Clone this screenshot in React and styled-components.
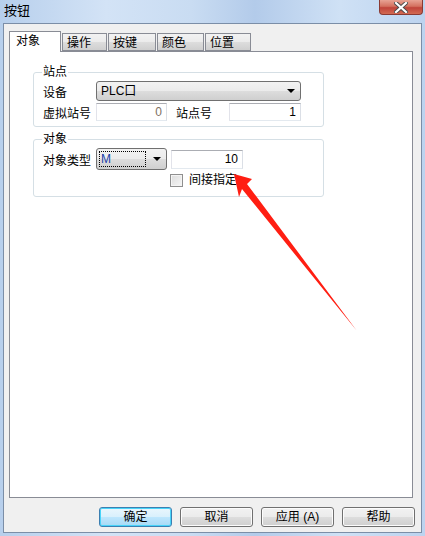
import React from 'react'
import styled, { createGlobalStyle } from 'styled-components'

const GlobalStyle = createGlobalStyle`
  html, body {
    margin: 0;
    padding: 0;
    background: #ffffff;
  }
  body {
    font-family: "Liberation Sans", "Noto Sans CJK SC", sans-serif;
    font-size: 12px;
    color: #000;
  }
`

const abas = [
  { nome: '对象', ativa: true, largura: 52 },
  { nome: '操作', largura: 45 },
  { nome: '按键', largura: 48 },
  { nome: '颜色', largura: 47 },
  { nome: '位置', largura: 46 },
]

const botoes = [
  { nome: '确定', foco: true },
  { nome: '取消' },
  { nome: '应用 (A)' },
  { nome: '帮助' },
]

const App = () => {

  return (

    <Janela>
      <GlobalStyle />

      <BarraTitulo>
        <Titulo>按钮</Titulo>
        <BotaoFechar>
          <svg width="14" height="11" viewBox="0 0 14 11">
            <path d="M2 1 L12 10 M12 1 L2 10" stroke="#4a4a4a" strokeWidth="4" strokeLinecap="square" />
            <path d="M2 1 L12 10 M12 1 L2 10" stroke="#ffffff" strokeWidth="2.2" strokeLinecap="square" />
          </svg>
        </BotaoFechar>
      </BarraTitulo>

      <Cliente>

        <Abas>
          { abas.map( aba => (
            <Aba key={ aba.nome } ativa={ aba.ativa } largura={ aba.largura }>{ aba.nome }</Aba>
          )) }
        </Abas>

        <Painel>

          <Grupo>
            <Legenda>站点</Legenda>
            <Linha>
              <Rotulo>设备</Rotulo>
              <Combo largura={ 205 }>
                <ComboTexto>PLC口</ComboTexto>
                <Seta />
              </Combo>
            </Linha>
            <Linha topo={ 2 }>
              <Rotulo>虚拟站号</Rotulo>
              <Campo largura={ 71 } cinza>0</Campo>
              <RotuloMeio>站点号</RotuloMeio>
              <Campo largura={ 72 }>1</Campo>
            </Linha>
          </Grupo>

          <Grupo segundo>
            <Legenda>对象</Legenda>
            <Linha>
              <Rotulo>对象类型</Rotulo>
              <Combo largura={ 71 } alto={ 22 }>
                <Foco>M</Foco>
                <Seta />
              </Combo>
              <Campo largura={ 72 } esquerda={ 4 } alto={ 19 }>10</Campo>
            </Linha>
            <LinhaCheck>
              <Caixa />
              <span>间接指定</span>
            </LinhaCheck>
          </Grupo>

        </Painel>

        <Botoes>
          { botoes.map( botao => (
            <Botao key={ botao.nome } foco={ botao.foco }>{ botao.nome }</Botao>
          )) }
        </Botoes>

      </Cliente>

      <Flecha width="425" height="536" viewBox="0 0 425 536">
        <polygon
          points="234,174 252,179 247,184 357,331 242,189 239,197"
          fill="#ff1e12"
        />
      </Flecha>

    </Janela>

  )

}

const Janela = styled.div `
  position: relative;
  width: 425px;
  height: 536px;
  box-sizing: border-box;
  display: flex;
  flex-direction: column;
  padding: 0 3px 3px 3px;
  background: linear-gradient(90deg, #b7cfec 0%, #d3e3f6 25%, #c9dcf2 45%, #b3cbea 60%, #cfe1f5 80%, #bcd3ef 100%);
  overflow: hidden;
`

const BarraTitulo = styled.div `
  height: 23px;
  display: flex;
  justify-content: space-between;
  align-items: flex-start;
`

const Titulo = styled.span `
  margin: 3px 0 0 1px;
  font-size: 13px;
  line-height: 16px;
  color: #000;
`

const BotaoFechar = styled.div `
  width: 44px;
  height: 15px;
  margin-right: -1px;
  box-sizing: border-box;
  border: 1px solid #8a3a33;
  border-top: none;
  border-radius: 0 0 4px 4px;
  background: linear-gradient(#e8a394 0%, #d4715f 45%, #c0443a 55%, #d26a52 100%);
  display: flex;
  align-items: center;
  justify-content: center;
`

const Cliente = styled.div `
  flex: 1;
  display: flex;
  flex-direction: column;
  background: #f0f0f0;
  border: 1px solid #7b8ea7;
  padding: 7px 8px 5px 5px;
  min-height: 0;
`

const Abas = styled.div `
  display: flex;
  align-items: flex-end;
  height: 20px;
  position: relative;
  z-index: 1;
`

const Aba = styled.div `
  width: ${ p => p.largura }px;
  height: ${ p => p.ativa ? 21 : 18 }px;
  box-sizing: border-box;
  margin-bottom: ${ p => p.ativa ? -1 : 0 }px;
  margin-right: 1px;
  border: 1px solid #898c95;
  border-bottom: ${ p => p.ativa ? 'none' : '1px solid #898c95' };
  background: ${ p => p.ativa ? '#ffffff' : 'linear-gradient(#f2f2f2, #ebebeb 50%, #dddddd 51%, #cfcfcf)' };
  padding-left: ${ p => p.ativa ? 6 : 4 }px;
  line-height: ${ p => p.ativa ? 19 : 18 }px;
  font-size: 12px;
`

const Painel = styled.div `
  flex: 1;
  background: #ffffff;
  border: 1px solid #898c95;
  padding: 13px 0 0 23px;
`

const Grupo = styled.fieldset `
  width: 291px;
  box-sizing: border-box;
  margin: ${ p => p.segundo ? '5px' : '0' } 0 0 0;
  padding: 2px 0 ${ p => p.segundo ? 9 : 5 }px 9px;
  border: 1px solid #d5dfe5;
  border-radius: 3px;
  min-width: 0;
`

const Legenda = styled.legend `
  padding: 0 1px;
  margin-left: -1px;
  font-size: 12px;
  line-height: 14px;
`

const Linha = styled.div `
  display: flex;
  align-items: center;
  margin-top: ${ p => p.topo || 0 }px;
`

const Rotulo = styled.span `
  width: 53px;
  flex: none;
  white-space: nowrap;
`

const RotuloMeio = styled.span `
  width: 62px;
  flex: none;
  padding-left: 9px;
  box-sizing: border-box;
  white-space: nowrap;
`

const Combo = styled.div `
  position: relative;
  width: ${ p => p.largura }px;
  height: ${ p => p.alto || 20 }px;
  box-sizing: border-box;
  border: 1px solid #707070;
  border-radius: 3px;
  background: linear-gradient(#f2f2f2, #ebebeb 50%, #dddddd 51%, #cfcfcf);
  display: flex;
  align-items: center;
  padding-left: 4px;
`

const ComboTexto = styled.span `
  line-height: 16px;
`

const Foco = styled.span `
  width: 47px;
  height: 16px;
  margin-left: -2px;
  box-sizing: border-box;
  border: 1px dotted #000;
  color: #1a3fa8;
  line-height: 14px;
  padding-left: 1px;
`

const Seta = styled.span `
  position: absolute;
  right: 5px;
  top: 50%;
  margin-top: -2px;
  width: 0;
  height: 0;
  border-left: 4px solid transparent;
  border-right: 4px solid transparent;
  border-top: 4px solid #000;
`

const Campo = styled.div `
  width: ${ p => p.largura }px;
  height: ${ p => p.alto || 18 }px;
  margin-left: ${ p => p.esquerda || 0 }px;
  box-sizing: border-box;
  border: 1px solid;
  border-color: #abadb3 #dbdfe6 #e3e9ef #e2e3ea;
  background: #ffffff;
  text-align: right;
  padding-right: 4px;
  line-height: 16px;
  color: ${ p => p.cinza ? '#7d6f62' : '#000' };
`

const LinhaCheck = styled.label `
  display: flex;
  align-items: center;
  gap: 6px;
  margin: 3px 0 0 127px;
  line-height: 14px;
`

const Caixa = styled.span `
  width: 13px;
  height: 13px;
  box-sizing: border-box;
  border: 1px solid #8f8f8f;
  background: linear-gradient(135deg, #dcdcdc, #f6f6f6);
  box-shadow: inset 0 0 0 1px #f4f4f4;
`

const Botoes = styled.div `
  display: flex;
  justify-content: flex-end;
  gap: 8px;
  margin: 9px -2px 0 0;
`

const Botao = styled.div `
  width: 73px;
  height: 20px;
  box-sizing: border-box;
  border: 1px solid ${ p => p.foco ? '#3c7fb1' : '#707070' };
  border-radius: 3px;
  background: ${ p => p.foco
    ? 'linear-gradient(#eaf6fd, #d9f0fc 50%, #bee6fd 51%, #a7d9f5)'
    : 'linear-gradient(#f2f2f2, #ebebeb 50%, #dddddd 51%, #cfcfcf)' };
  box-shadow: ${ p => p.foco ? 'inset 0 0 0 1px #48d4f9' : 'inset 0 0 0 1px #fcfcfc' };
  text-align: center;
  line-height: 18px;
  font-size: 12px;
`

const Flecha = styled.svg `
  position: absolute;
  left: 0;
  top: 0;
  pointer-events: none;
`

export default App
